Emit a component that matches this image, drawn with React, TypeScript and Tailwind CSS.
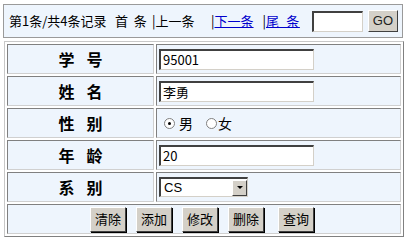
import React from 'react';

const cjk = '"Noto Sans CJK SC", "Liberation Sans", sans-serif';

const rows = [
  { label: ['学', '号'], kind: 'text', value: '95001' },
  { label: ['姓', '名'], kind: 'text', value: '李勇' },
  { label: ['性', '别'], kind: 'radio', value: '' },
  { label: ['年', '龄'], kind: 'text', value: '20' },
  { label: ['系', '别'], kind: 'select', value: 'CS' },
];

const buttons = ['清除', '添加', '修改', '删除', '查询'];

const Input = ({ value, width }: { value: string; width: string }) => (
  <div
    className={`${width} h-[21px] bg-white border-t-2 border-l-2 border-t-[#404040] border-l-[#404040] border-r border-b border-r-[#d4d0c8] border-b-[#d4d0c8] flex items-center pl-[2px] text-[13px] text-black leading-none`}
  >
    {value}
  </div>
);

const Button = ({ label }: { label: string }) => (
  <div className="h-[25px] px-[4px] bg-[#d4d0c8] border border-t-white border-l-white border-r-[#404040] border-b-[#404040] shadow-[1px_1px_0_#000] flex items-center text-[13px] text-black">
    {label}
  </div>
);

const App = () => {
  return (
    <div className="w-[406px] h-[242px] bg-white" style={{ fontFamily: cjk }}>
      <div className="pt-[4px] px-[3px]">
        <div className="h-[34px] border border-[#9a9a9a] bg-[#eef5fd] flex items-center pl-[5px] pr-[4px] text-[13px] text-black whitespace-pre">
          <span className="w-[106px] shrink-0">第1条/共4条记录</span>
          <span className="w-[37px] shrink-0">首  条</span>
          <span className="w-[59px] shrink-0">|上一条</span>
          <span>|</span>
          <span className="w-[48px] shrink-0 text-[#0000cc] underline">下一条</span>
          <span>|</span>
          <span className="text-[#0000cc] underline tracking-[0.5px]">尾  条</span>
          <div className="ml-[12px]">
            <Input value="" width="w-[51px]" />
          </div>
          <div className="ml-[5px] h-[22px] w-[32px] bg-[#d4d0c8] border border-t-white border-l-white border-r-[#404040] border-b-[#404040] flex items-center justify-center text-[13px] text-[#222]" style={{ fontFamily: '"Liberation Sans", sans-serif' }}>
            GO
          </div>
        </div>
      </div>
      <div className="px-[4px] pt-[3px]">
        <table className="w-[400px] border-separate border-spacing-[2px] border border-t-[#c8c8c8] border-l-[#c8c8c8] border-r-[#808080] border-b-[#808080] bg-white">
          <tbody>
            {rows.map((row) => (
              <tr key={row.label.join('')} className="h-[30px]">
                <td className="w-[147px] bg-[#eef5fd] border border-t-[#808080] border-l-[#808080] border-r-[#d0d0d0] border-b-[#d0d0d0] text-[16px] font-bold text-black">
                  <div className="flex justify-center gap-[12px]">
                    <span>{row.label[0]}</span>
                    <span>{row.label[1]}</span>
                  </div>
                </td>
                <td className="bg-[#eef5fd] border border-t-[#808080] border-l-[#808080] border-r-[#d0d0d0] border-b-[#d0d0d0] pl-[2px]">
                  {row.kind === 'text' && <Input value={row.value} width="w-[155px]" />}
                  {row.kind === 'radio' && (
                    <div className="flex items-center text-[14px] text-black pl-[5px]">
                      <span className="w-[11px] h-[11px] rounded-full bg-white border border-[#808080] flex items-center justify-center">
                        <span className="w-[3px] h-[3px] rounded-full bg-black" />
                      </span>
                      <span className="ml-[4px]">男</span>
                      <span className="ml-[13px] w-[11px] h-[11px] rounded-full bg-white border border-[#808080]" />
                      <span className="ml-[1px]">女</span>
                    </div>
                  )}
                  {row.kind === 'select' && (
                    <div className="w-[89px] h-[20px] bg-white border-t-2 border-l-2 border-t-[#404040] border-l-[#404040] border-r border-b border-r-[#d4d0c8] border-b-[#d4d0c8] flex items-center justify-between text-[13px] text-black" style={{ fontFamily: '"Liberation Sans", sans-serif' }}>
                      <span className="pl-[3px]">CS</span>
                      <span className="w-[15px] h-[16px] bg-[#d4d0c8] border border-t-white border-l-white border-r-[#404040] border-b-[#404040] flex items-center justify-center">
                        <span className="w-0 h-0 border-l-[3px] border-r-[3px] border-t-[3px] border-l-transparent border-r-transparent border-t-black" />
                      </span>
                    </div>
                  )}
                </td>
              </tr>
            ))}
            <tr className="h-[30px]">
              <td colSpan={2} className="bg-[#eef5fd] border border-t-[#808080] border-l-[#808080] border-r-[#d0d0d0] border-b-[#d0d0d0]">
                <div className="flex items-center justify-center gap-[10px] pr-[4px]">
                  {buttons.map((b, i) => (
                    <div key={b} className={i === 4 ? 'ml-[4px]' : ''}>
                      <Button label={b} />
                    </div>
                  ))}
                </div>
              </td>
            </tr>
          </tbody>
        </table>
      </div>
    </div>
  );
};

export default App;
